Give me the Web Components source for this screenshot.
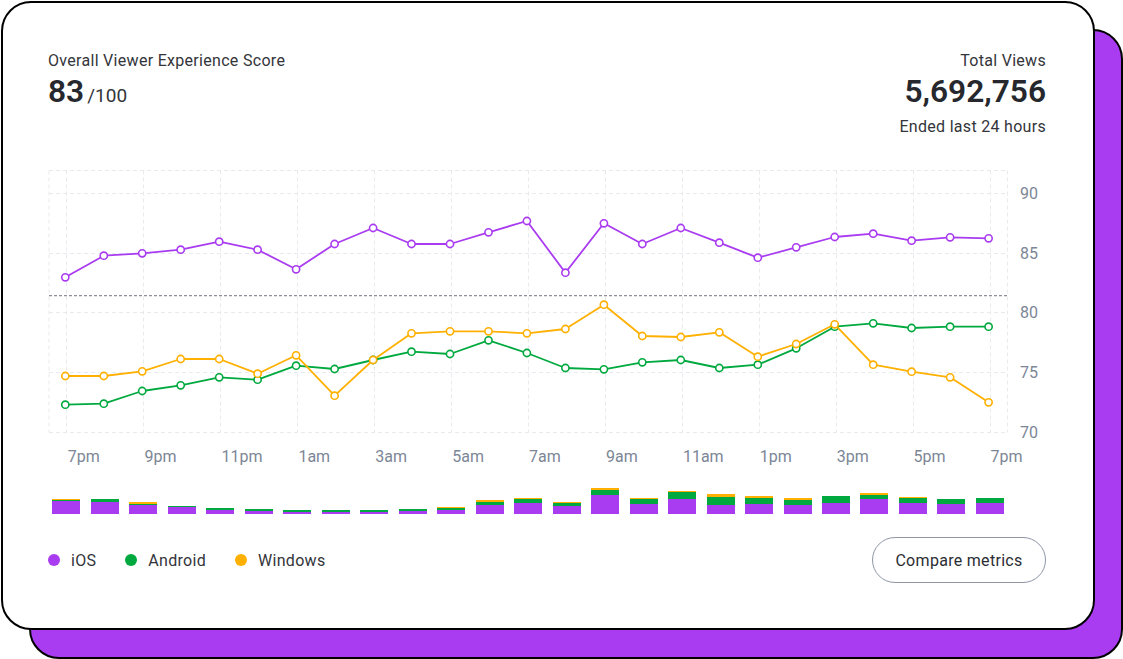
<!DOCTYPE html>
<html lang="en">
<head>
<meta charset="utf-8">
<title>Viewer experience</title>
<style>
  html, body { margin: 0; background: #fff; }
  body { font-family: Roboto, "Liberation Sans", sans-serif; color: #2b2d33; }
</style>
</head>
<body>
<offset-panel>
  <div slot="header-left">
    <stat-block label="Overall Viewer Experience Score" value="83" suffix="/100"></stat-block>
  </div>
  <div slot="header-right">
    <stat-block align="end" label="Total Views" value="5,692,756" note="Ended last 24 hours"></stat-block>
  </div>
  <trend-chart slot="chart"></trend-chart>
  <volume-bars slot="chart"></volume-bars>
  <legend-item slot="legend" color="#a93bf0">iOS</legend-item>
  <legend-item slot="legend" color="#00a93f">Android</legend-item>
  <legend-item slot="legend" color="#ffb000">Windows</legend-item>
  <pill-button slot="action">Compare metrics</pill-button>
</offset-panel>

<script>
const PURPLE = "#a93bf0";
const GREEN = "#00a93f";
const YELLOW = "#ffb000";

class OffsetPanel extends HTMLElement {
  constructor() {
    super();
    this.attachShadow({ mode: "open" });
    this.shadowRoot.innerHTML = `
      <style>
        :host { display: grid; width: 1123px; height: 659px; }
        .back, .card { grid-area: 1 / 1; box-sizing: border-box; border: 2px solid #000; border-radius: 30px; }
        .back { margin: 29px 0 0 29px; background: ${PURPLE}; }
        .card { margin: 1px 28px 29px 1px; background: #fff; padding: 48px 47px 0 45px; display: flex; flex-direction: column; }
        header { display: flex; justify-content: space-between; height: 114px; }
        footer { display: flex; justify-content: space-between; align-items: center; margin-top: 23px; }
        .legend { display: flex; gap: 29px; }
      </style>
      <div class="back"></div>
      <section class="card">
        <header>
          <slot name="header-left"></slot>
          <slot name="header-right"></slot>
        </header>
        <slot name="chart"></slot>
        <footer>
          <div class="legend"><slot name="legend"></slot></div>
          <slot name="action"></slot>
        </footer>
      </section>
    `;
  }
}

class StatBlock extends HTMLElement {
  constructor() {
    super();
    this.attachShadow({ mode: "open" });
  }

  connectedCallback() {
    const label = this.getAttribute("label");
    const value = this.getAttribute("value");
    const suffix = this.getAttribute("suffix");
    const note = this.getAttribute("note");
    this.shadowRoot.innerHTML = `
      <style>
        :host { display: flex; flex-direction: column; align-items: ${this.getAttribute("align") === "end" ? "flex-end" : "flex-start"}; }
        .label, .note { font-size: 16px; line-height: 20px; letter-spacing: 0.3px; color: #33353a; white-space: nowrap; }
        .value { font-size: 31.7px; line-height: 42px; font-weight: 600; color: #26282d; white-space: nowrap; }
        .suffix { font-size: 19px; font-weight: 400; margin-left: 3px; color: #33353a; }
        .note { margin-top: 4px; }
      </style>
      <div class="label">${label}</div>
      <div class="value">${value}${suffix ? `<span class="suffix">${suffix}</span>` : ""}</div>
      ${note ? `<div class="note">${note}</div>` : ""}
    `;
  }
}

class TrendChart extends HTMLElement {
  constructor() {
    super();
    this.attachShadow({ mode: "open" });

    const series = [
      { color: PURPLE, ys: [277.3, 255.7, 253.3, 249.7, 241.7, 249.7, 269.3, 244, 228, 244, 244, 232.3, 221, 272.7, 223.3, 244, 228, 242.7, 257.7, 247.3, 237, 233.7, 240.7, 237.3, 238.3] },
      { color: GREEN, ys: [404.7, 403.7, 391, 385.3, 377.3, 379.7, 365.7, 369, 360, 351.7, 354, 340.3, 353, 368, 369.3, 362.3, 360, 368, 364.7, 348.3, 326.7, 323.3, 328, 326.7, 326.7] },
      { color: YELLOW, ys: [376, 376, 371.3, 359, 359, 373.7, 355.3, 395.7, 360, 333.3, 331.3, 331.3, 333.3, 329, 304.7, 336, 337, 332.3, 356.7, 344, 324.3, 364.7, 371.7, 377.3, 402.3] },
    ];
    const xOf = (i) => 65.3 + i * 38.47;

    const hLines = [170.5, 193.5, 253.5, 312.5, 372.5, 432.5];
    const vLines = [49, 66.5, 143.5, 220.5, 297.5, 374.5, 451.5, 528.5, 605.5, 682.5, 759.5, 836.5, 913.5, 990.5, 1007.5];
    const xLabels = ["7pm", "9pm", "11pm", "1am", "3am", "5am", "7am", "9am", "11am", "1pm", "3pm", "5pm", "7pm"];
    const yLabels = [[90, 193.5], [85, 253.5], [80, 312.5], [75, 372.5], [70, 432.5]];

    const grid = hLines.map((y) => `<line x1="49" x2="1007.5" y1="${y}" y2="${y}"/>`).join("")
      + vLines.map((x) => `<line x1="${x}" x2="${x}" y1="170.5" y2="432.5"/>`).join("");

    const lines = series.map((s) => {
      const points = s.ys.map((y, i) => `${xOf(i).toFixed(1)},${y}`).join(" ");
      const dots = s.ys.map((y, i) => `<circle cx="${xOf(i).toFixed(1)}" cy="${y}" r="3.6"/>`).join("");
      return `<g stroke="${s.color}"><polyline points="${points}"/><g class="dots">${dots}</g></g>`;
    }).join("");

    this.shadowRoot.innerHTML = `
      <style>
        :host { display: block; height: 305px; }
        svg { display: block; overflow: visible; }
        .grid line { stroke: #e9eaed; stroke-width: 1; stroke-dasharray: 4 3; }
        .limit { stroke: #8e9099; stroke-width: 1.2; stroke-dasharray: 3 2; }
        polyline { fill: none; stroke-width: 1.8; stroke-linejoin: round; }
        .dots circle { fill: #fff; stroke-width: 1.6; }
        text { font-family: Roboto, "Liberation Sans", sans-serif; font-size: 16px; fill: #7c8696; }
      </style>
      <svg width="998" height="305" viewBox="48 165 998 305">
        <g class="grid">${grid}</g>
        <line class="limit" x1="49" x2="1007.5" y1="295.7" y2="295.7"/>
        ${lines}
        ${xLabels.map((t, i) => `<text x="${67.7 + i * 76.9}" y="462">${t}</text>`).join("")}
        ${yLabels.map(([t, y]) => `<text x="1020" y="${y + 5.5}">${t}</text>`).join("")}
      </svg>
    `;
  }
}

class VolumeBars extends HTMLElement {
  constructor() {
    super();
    this.attachShadow({ mode: "open" });

    // ios, android, windows heights in px
    const bars = [
      [13, 1, 1], [12.5, 2.3, 0], [8.7, 1.7, 1.3], [7, 1.3, 0], [4.3, 1.3, 0],
      [3, 1.7, 0], [2, 1.7, 0], [2, 1.7, 0], [2, 1.7, 0], [3.3, 1.3, 0],
      [4.3, 1.3, 1], [8.7, 3.7, 1.3], [11.3, 3.3, 1.3], [8, 3.3, 1], [19.3, 4.3, 2.7],
      [10.3, 4.3, 1.3], [14.7, 7, 1], [9, 7.7, 3], [10.3, 5.3, 2.7], [9, 4.7, 2.7],
      [11.3, 7, 0], [14.7, 4.7, 1.3], [11.3, 4.7, 1.3], [10.3, 4.3, 0], [11.3, 4.7, 0],
    ];

    this.shadowRoot.innerHTML = `
      <style>
        :host { display: flex; align-items: flex-end; gap: 10.49px; height: 44px; padding-left: 4.3px; }
        .bar { width: 28px; display: flex; flex-direction: column; }
      </style>
      ${bars.map(([ios, android, windows]) => `
        <div class="bar">
          <div style="height:${windows}px;background:${YELLOW}"></div>
          <div style="height:${android}px;background:${GREEN}"></div>
          <div style="height:${ios}px;background:${PURPLE}"></div>
        </div>
      `).join("")}
    `;
  }
}

class LegendItem extends HTMLElement {
  constructor() {
    super();
    this.attachShadow({ mode: "open" });
  }

  connectedCallback() {
    this.shadowRoot.innerHTML = `
      <style>
        :host { display: inline-flex; align-items: center; gap: 11px; font-size: 16px; letter-spacing: 0.3px; color: #33353a; }
        i { width: 12px; height: 12px; border-radius: 50%; background: ${this.getAttribute("color")}; }
      </style>
      <i></i><slot></slot>
    `;
  }
}

class PillButton extends HTMLElement {
  constructor() {
    super();
    this.attachShadow({ mode: "open" });
    this.shadowRoot.innerHTML = `
      <style>
        :host { display: inline-flex; }
        button {
          box-sizing: border-box; width: 174px; height: 46px; padding: 0;
          border: 1px solid #8d95a6; border-radius: 23px; background: #fff;
          font: 16px Roboto, "Liberation Sans", sans-serif; letter-spacing: 0.3px; color: #2b2d33;
        }
      </style>
      <button><slot></slot></button>
    `;
  }
}

customElements.define("offset-panel", OffsetPanel);
customElements.define("stat-block", StatBlock);
customElements.define("trend-chart", TrendChart);
customElements.define("volume-bars", VolumeBars);
customElements.define("legend-item", LegendItem);
customElements.define("pill-button", PillButton);
</script>
</body>
</html>
